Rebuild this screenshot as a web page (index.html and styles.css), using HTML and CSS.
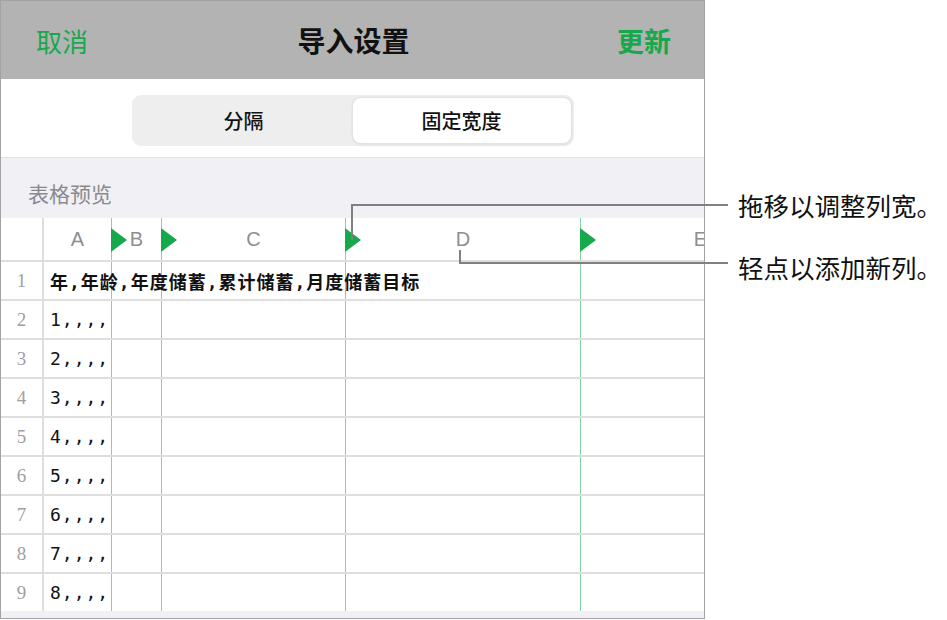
FILE: index.html
```html
<!DOCTYPE html>
<html lang="zh-CN">
  <head>
    <meta charset="UTF-8" />
    <meta name="viewport" content="width=device-width, initial-scale=1.0" />
    <title>导入设置</title>
    <link rel="stylesheet" href="styles.css">
  </head>
  <body>
    <div class="figure">
      <div class="device">
        <header class="navbar">
          <span class="nav-btn">取消</span>
          <h1 class="nav-title">导入设置</h1>
          <span class="nav-btn nav-btn-strong">更新</span>
        </header>

        <div class="segment-bar">
          <div class="segmented">
            <div class="segment">分隔</div>
            <div class="segment is-selected">固定宽度</div>
          </div>
        </div>

        <div class="section-title">表格预览</div>

        <!-- === preview sheet === -->
        <div class="sheet">
          <div class="sheet-row sheet-head">
            <div class="rownum"></div>
            <div class="cell">A</div>
            <div class="cell col-break">B</div>
            <div class="cell col-break">C</div>
            <div class="cell col-break">D</div>
            <div class="cell col-break">E</div>
          </div>
          <div class="sheet-row">
            <div class="rownum">1</div>
            <div class="cell data data-head">年,年龄,年度储蓄,累计储蓄,月度储蓄目标</div>
            <div class="cell col-break"></div>
            <div class="cell col-break"></div>
            <div class="cell col-break"></div>
            <div class="cell col-break"></div>
          </div>
          <div class="sheet-row">
            <div class="rownum">2</div>
            <div class="cell data">1,,,,</div>
            <div class="cell col-break"></div>
            <div class="cell col-break"></div>
            <div class="cell col-break"></div>
            <div class="cell col-break"></div>
          </div>
          <div class="sheet-row">
            <div class="rownum">3</div>
            <div class="cell data">2,,,,</div>
            <div class="cell col-break"></div>
            <div class="cell col-break"></div>
            <div class="cell col-break"></div>
            <div class="cell col-break"></div>
          </div>
          <div class="sheet-row">
            <div class="rownum">4</div>
            <div class="cell data">3,,,,</div>
            <div class="cell col-break"></div>
            <div class="cell col-break"></div>
            <div class="cell col-break"></div>
            <div class="cell col-break"></div>
          </div>
          <div class="sheet-row">
            <div class="rownum">5</div>
            <div class="cell data">4,,,,</div>
            <div class="cell col-break"></div>
            <div class="cell col-break"></div>
            <div class="cell col-break"></div>
            <div class="cell col-break"></div>
          </div>
          <div class="sheet-row">
            <div class="rownum">6</div>
            <div class="cell data">5,,,,</div>
            <div class="cell col-break"></div>
            <div class="cell col-break"></div>
            <div class="cell col-break"></div>
            <div class="cell col-break"></div>
          </div>
          <div class="sheet-row">
            <div class="rownum">7</div>
            <div class="cell data">6,,,,</div>
            <div class="cell col-break"></div>
            <div class="cell col-break"></div>
            <div class="cell col-break"></div>
            <div class="cell col-break"></div>
          </div>
          <div class="sheet-row">
            <div class="rownum">8</div>
            <div class="cell data">7,,,,</div>
            <div class="cell col-break"></div>
            <div class="cell col-break"></div>
            <div class="cell col-break"></div>
            <div class="cell col-break"></div>
          </div>
          <div class="sheet-row">
            <div class="rownum">9</div>
            <div class="cell data">8,,,,</div>
            <div class="cell col-break"></div>
            <div class="cell col-break"></div>
            <div class="cell col-break"></div>
            <div class="cell col-break"></div>
          </div>
        </div>
        <div class="sheet-foot"></div>
      </div>

      <div class="notes">
        <p class="note">拖移以调整列宽。</p>
        <p class="note">轻点以添加新列。</p>
      </div>

      <!-- callout leader lines -->
      <svg class="leaders" width="947" height="620" viewBox="0 0 947 620">
        <path d="M352 240 V205 H728" />
        <path d="M460 250 V263 H728" />
      </svg>
    </div>
  </body>
</html>
```

FILE: styles.css
```css
body {
  margin: 0;
  background: #fff;
  font-family: "Noto Sans CJK SC", "Noto Sans", sans-serif;
}

.figure {
  position: relative;
  display: flex;
  width: 947px;
  height: 620px;
}

.device {
  width: 705px;
  height: 619px;
  box-sizing: border-box;
  border: 1px solid #a3a3a3;
  overflow: hidden;
  flex-shrink: 0;
  display: flex;
  flex-direction: column;
}

/* nav bar */
.navbar {
  height: 78px;
  flex-shrink: 0;
  background: #b3b3b3;
  display: grid;
  grid-template-columns: 1fr auto 1fr;
  align-items: center;
  padding: 0 33px 0 35px;
}

.nav-btn {
  font-size: 26px;
  color: #17a84c;
}

.nav-btn-strong {
  justify-self: end;
  font-weight: 700;
  font-size: 27px;
}

.nav-title {
  margin: 0;
  font-size: 28px;
  font-weight: 700;
  color: #111;
}

/* segmented control */
.segment-bar {
  height: 79px;
  flex-shrink: 0;
  box-sizing: border-box;
  border-bottom: 1px solid #e0e0e4;
  display: flex;
  justify-content: center;
  align-items: flex-start;
  padding-top: 16px;
}

.segmented {
  width: 442px;
  height: 51px;
  box-sizing: border-box;
  padding: 3px;
  border-radius: 9px;
  background: #eeeeef;
  display: flex;
}

.segment {
  flex: 1;
  display: flex;
  align-items: center;
  justify-content: center;
  font-size: 20px;
  font-weight: 500;
  color: #111;
  border-radius: 8px;
}

.segment.is-selected {
  background: #fff;
  box-shadow: 0 0 0 1.5px #e3e3e3, 0 2px 3px rgba(0, 0, 0, 0.06);
}

.section-title {
  height: 60px;
  flex-shrink: 0;
  box-sizing: border-box;
  padding: 22px 0 0 27px;
  line-height: 26px;
  font-size: 21px;
  color: #8a8a8e;
  background: #f0f0f5;
}

/* sheet */
.sheet {
  height: 393px;
  flex-shrink: 0;
  overflow: hidden;
  background: #fff;
}

.sheet-row {
  display: grid;
  grid-template-columns: 43px 67px 50px 184px 235px 240px;
  height: 39px;
  box-sizing: border-box;
  border-bottom: 2px solid #dedede;
}

.sheet-head {
  height: 44px;
}

.rownum {
  border-right: 2px solid #dedede;
  display: flex;
  align-items: center;
  justify-content: center;
  font-family: "Liberation Serif", serif;
  font-size: 19px;
  color: #a0a0a0;
}

.cell {
  position: relative;
  display: flex;
  align-items: center;
  white-space: nowrap;
}

.sheet-head .cell {
  justify-content: center;
  font-family: "Liberation Sans", sans-serif;
  font-size: 20px;
  color: #8e8e93;
}

.col-break {
  border-left: 1px solid #84d3a5;
}

.sheet-head .col-break::before {
  content: "";
  position: absolute;
  left: -1px;
  top: 10px;
  width: 16px;
  height: 24px;
  background: #16a94b;
  clip-path: polygon(0 0, 100% 50%, 0 100%);
}

.data {
  padding-left: 6px;
  font-family: "DejaVu Sans Mono", "Noto Sans CJK SC", monospace;
  font-size: 18px;
  letter-spacing: 1px;
  color: #111;
  z-index: 1;
}

.data-head {
  font-weight: 700;
}

.sheet-foot {
  flex: 1;
  background: #f0f0f5;
}

/* callouts */
.notes {
  flex: 1;
  min-width: 0;
  padding: 190px 0 0 33px;
  display: flex;
  flex-direction: column;
  gap: 32px;
}

.note {
  margin: 0;
  font-size: 25.5px;
  line-height: 30px;
  color: #111;
  white-space: nowrap;
}

.leaders {
  position: absolute;
  left: 0;
  top: 0;
  pointer-events: none;
}

.leaders path {
  fill: none;
  stroke: #808080;
  stroke-width: 2;
}
```
